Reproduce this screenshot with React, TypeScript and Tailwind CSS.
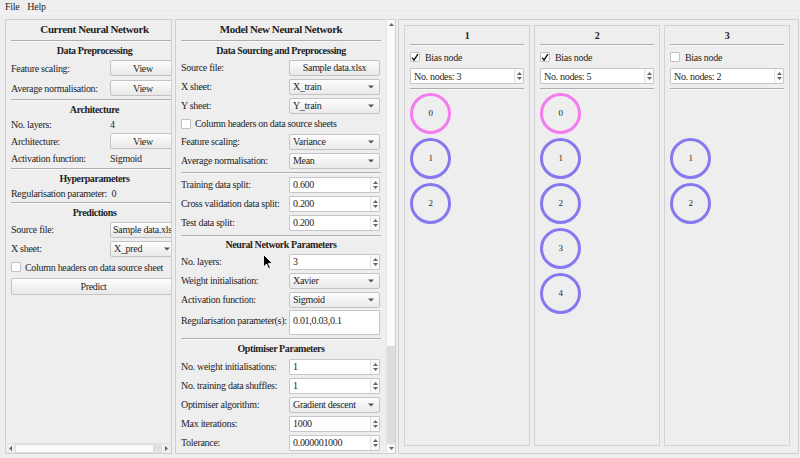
import React from "react";

const Tri = () => (
  <svg width="6" height="4" viewBox="0 0 6 4" className="shrink-0">
    <path d="M0 0.5H6L3 3.5Z" fill="#555" />
  </svg>
);

function Sep({ className = "" }: { className?: string }) {
  return <div className={`h-[2px] border-t border-[#aeacae] border-b border-b-[#f8f8f8] ${className}`} />;
}

function Button({ children, className = "" }: { children: React.ReactNode; className?: string }) {
  return (
    <div
      className={`h-[16px] flex items-center justify-center border border-[#c4c2c4] rounded-[2px] bg-linear-to-b from-[#fdfdfd] to-[#e9e8e9] overflow-hidden whitespace-nowrap ${className}`}
    >
      {children}
    </div>
  );
}

function Combo({ text, className = "" }: { text: string; className?: string }) {
  return (
    <div
      className={`h-[16px] flex items-center justify-between pl-[3px] pr-[5px] border border-[#c4c2c4] rounded-[2px] bg-linear-to-b from-[#fdfdfd] to-[#ebeaeb] overflow-hidden whitespace-nowrap ${className}`}
    >
      <span>{text}</span>
      <Tri />
    </div>
  );
}

function Spin({ text, className = "" }: { text: string; className?: string }) {
  return (
    <div className={`h-[16px] flex border border-[#c8c6c8] bg-white rounded-[1px] ${className}`}>
      <div className="flex-1 flex items-center pl-[3px] whitespace-nowrap overflow-hidden">{text}</div>
      <div className="w-[9px] border-l border-[#e3e1e3] flex flex-col items-center justify-center gap-[2px] bg-[#fafafa]">
        <svg width="5" height="3" viewBox="0 0 5 3">
          <path d="M0 3H5L2.5 0Z" fill="#666" />
        </svg>
        <svg width="5" height="3" viewBox="0 0 5 3">
          <path d="M0 0H5L2.5 3Z" fill="#666" />
        </svg>
      </div>
    </div>
  );
}

function Check({ checked = false }: { checked?: boolean }) {
  return (
    <div className="w-[10px] h-[10px] border border-[#c2c0c2] bg-white rounded-[1px] flex items-center justify-center shrink-0">
      {checked && (
        <svg width="9" height="9" viewBox="0 0 9 9">
          <path d="M1.2 4.6L3.4 7.4L7.8 0.8" stroke="#111" strokeWidth="1.6" fill="none" />
        </svg>
      )}
    </div>
  );
}

function LRow({ label, h, children }: { label: string; h: string; children?: React.ReactNode }) {
  return (
    <div className={`flex items-center ${h}`}>
      <div className="w-[99px] shrink-0 whitespace-nowrap">{label}</div>
      <div className="w-[66px] shrink-0">{children}</div>
    </div>
  );
}

function MRow({ label, h = "h-[19px]", children }: { label: string; h?: string; children?: React.ReactNode }) {
  return (
    <div className={`flex items-center ${h}`}>
      <div className="w-[108px] shrink-0 whitespace-nowrap">{label}</div>
      <div className="w-[91px] shrink-0">{children}</div>
    </div>
  );
}

function Title({ children, h }: { children: React.ReactNode; h: string }) {
  return <div className={`${h} flex items-center justify-center font-bold text-[11px] tracking-[-0.4px]`}>{children}</div>;
}
function Heading({ children, h }: { children: React.ReactNode; h: string }) {
  return <div className={`${h} flex items-center justify-center font-bold tracking-[-0.4px]`}>{children}</div>;
}

function Node({ n, bias }: { n: number; bias?: boolean }) {
  return (
    <div
      className={`w-[41px] h-[41px] rounded-full border-[3px] ${bias ? "border-[#f27cf0]" : "border-[#8479ee]"} flex items-center justify-center text-[9px]`}
    >
      {n}
    </div>
  );
}

function Layer({ title, bias, n }: { title: string; bias: boolean; n: number }) {
  const nodes: React.ReactNode[] = [];
  if (bias) {
    nodes.push(<Node key="b" n={0} bias />);
    for (let i = 1; i < n; i++) nodes.push(<Node key={i} n={i} />);
  } else {
    nodes.push(<div key="b" className="h-[41px]" />);
    for (let i = 1; i <= n; i++) nodes.push(<Node key={i} n={i} />);
  }
  return (
    <div className="w-[126px] border border-[#d3d1d3] flex flex-col px-[5px]">
      <div className="h-[18px] flex items-center justify-center font-bold">{title}</div>
      <Sep />
      <div className="h-[22px] flex items-center gap-[5px]">
        <Check checked={bias} />
        <span>Bias node</span>
      </div>
      <Spin text={`No. nodes: ${n}`} className="h-[15px]" />
      <Sep className="mt-[4px]" />
      <div className="flex flex-col gap-[4px] mt-[3px]">{nodes}</div>
    </div>
  );
}

export default function App() {
  return (
    <div className="relative w-[800px] h-[458px] bg-[#efeeef] flex flex-col text-[10px] tracking-[-0.3px] text-[#1e1e1e] font-['Liberation_Serif',serif] overflow-hidden">
      {/* menu */}
      <div className="h-[14px] flex items-center gap-[8px] pl-[5px] border-b border-[#f6f6f6]">
        <span>File</span>
        <span>Help</span>
      </div>

      <div className="flex-1 flex pl-[5px] pt-[5px] pb-[4px] gap-[3px]">
        {/* Left panel */}
        <div className="w-[167px] border border-[#d0ced0] flex flex-col">
          <div className="flex-1 overflow-hidden">
            <div className="w-[172px] pl-[5px] pt-[0px] flex flex-col">
              <Title h="h-[19px]">Current Neural Network</Title>
              <Sep className="mt-[1px]" />
              <Heading h="h-[16px]">Data Preprocessing</Heading>
              <LRow label="Feature scaling:" h="h-[20px]">
                <Button>View</Button>
              </LRow>
              <LRow label="Average normalisation:" h="h-[20px]">
                <Button>View</Button>
              </LRow>
              <Sep className="mt-[1px]" />
              <Heading h="h-[16px]">Architecture</Heading>
              <LRow label="No. layers:" h="h-[15px]">
                4
              </LRow>
              <LRow label="Architecture:" h="h-[18px]">
                <Button>View</Button>
              </LRow>
              <LRow label="Activation function:" h="h-[16px]">
                Sigmoid
              </LRow>
              <Sep className="mt-[2px]" />
              <Heading h="h-[17px]">Hyperparameters</Heading>
              <div className="h-[13px] flex items-center whitespace-nowrap">Regularisation parameter:&nbsp; 0</div>
              <Sep className="mt-[2px]" />
              <Heading h="h-[16px]">Predictions</Heading>
              <LRow label="Source file:" h="h-[19px]">
                <Button className="!justify-start pl-[2px]">Sample data.xlsx</Button>
              </LRow>
              <LRow label="X sheet:" h="h-[19px]">
                <Combo text="X_pred" />
              </LRow>
              <div className="h-[18px] flex items-center gap-[4px] whitespace-nowrap">
                <Check />
                <span>Column headers on data source sheet</span>
              </div>
              <Button className="mt-[2px] h-[17px] w-[165px]">Predict</Button>
            </div>
          </div>
          {/* horizontal scrollbar */}
          <div className="h-[10px] flex items-stretch border-t border-[#e2e0e2] bg-[#efeeef]">
            <div className="w-[9px] flex items-center justify-center">
              <svg width="3" height="5" viewBox="0 0 3 5">
                <path d="M3 0V5L0 2.5Z" fill="#666" />
              </svg>
            </div>
            <div className="flex-1 bg-[#fbfbfb] border border-[#dcdadc]" />
            <div className="w-[8px] bg-[#e2e0e2]" />
            <div className="w-[9px] flex items-center justify-center">
              <svg width="3" height="5" viewBox="0 0 3 5">
                <path d="M0 0V5L3 2.5Z" fill="#666" />
              </svg>
            </div>
          </div>
        </div>

        {/* Middle panel */}
        <div className="w-[221px] border border-[#d0ced0] flex">
          <div className="w-[210px] overflow-hidden px-[5px] flex flex-col">
            <Title h="h-[19px]">Model New Neural Network</Title>
            <Sep className="mt-[1px]" />
            <Heading h="h-[16px]">Data Sourcing and Preprocessing</Heading>
            <MRow label="Source file:">
              <Button>Sample data.xlsx</Button>
            </MRow>
            <MRow label="X sheet:">
              <Combo text="X_train" />
            </MRow>
            <MRow label="Y sheet:">
              <Combo text="Y_train" />
            </MRow>
            <div className="h-[17px] flex items-center gap-[4px] whitespace-nowrap">
              <Check />
              <span>Column headers on data source sheets</span>
            </div>
            <MRow label="Feature scaling:">
              <Combo text="Variance" />
            </MRow>
            <MRow label="Average normalisation:">
              <Combo text="Mean" />
            </MRow>
            <Sep className="mt-[2px]" />
            <div className="mt-[1px]" />
            <MRow label="Training data split:">
              <Spin text="0.600" />
            </MRow>
            <MRow label="Cross validation data split:">
              <Spin text="0.200" />
            </MRow>
            <MRow label="Test data split:">
              <Spin text="0.200" />
            </MRow>
            <Sep className="mt-[3px]" />
            <Heading h="h-[15px]">Neural Network Parameters</Heading>
            <MRow label="No. layers:">
              <Spin text="3" />
            </MRow>
            <MRow label="Weight initialisation:">
              <Combo text="Xavier" />
            </MRow>
            <MRow label="Activation function:">
              <Combo text="Sigmoid" />
            </MRow>
            <div className="h-[27px] flex items-center">
              <div className="w-[108px] shrink-0 whitespace-nowrap pb-[4px]">Regularisation parameter(s):</div>
              <div className="w-[91px] h-[25px] bg-white border border-[#c8c6c8] rounded-[1px] pl-[3px] pt-[2px]">
                0.01,0.03,0.1
              </div>
            </div>
            <Sep className="mt-[2px]" />
            <Heading h="h-[17px]">Optimiser Parameters</Heading>
            <MRow label="No. weight initialisations:">
              <Spin text="1" />
            </MRow>
            <MRow label="No. training data shuffles:">
              <Spin text="1" />
            </MRow>
            <MRow label="Optimiser algorithm:">
              <Combo text="Gradient descent" />
            </MRow>
            <MRow label="Max iterations:">
              <Spin text="1000" />
            </MRow>
            <MRow label="Tolerance:">
              <Spin text="0.000001000" />
            </MRow>
          </div>
          {/* vertical scrollbar */}
          <div className="w-[9px] flex flex-col bg-[#fafafa] border-l border-[#e6e4e6]">
            <div className="h-[9px] flex items-center justify-center">
              <svg width="5" height="3" viewBox="0 0 5 3">
                <path d="M0 3H5L2.5 0Z" fill="#666" />
              </svg>
            </div>
            <div className="flex-1 flex flex-col justify-end">
              <div className="h-[98px] bg-[#dedcde]" />
            </div>
            <div className="h-[9px] flex items-center justify-center">
              <svg width="5" height="3" viewBox="0 0 5 3">
                <path d="M0 0H5L2.5 3Z" fill="#666" />
              </svg>
            </div>
          </div>
        </div>

        {/* Right panel */}
        <div className="ml-[-1px] w-[401px] border border-[#d0ced0] flex gap-[4px] pl-[5px] pt-[5px] pb-[7px]">
          <Layer title="1" bias={true} n={3} />
          <Layer title="2" bias={true} n={5} />
          <Layer title="3" bias={false} n={2} />
        </div>
      </div>

      {/* mouse cursor */}
      <svg className="absolute left-[263px] top-[254px]" width="10" height="16" viewBox="0 0 10 16">
        <path d="M0.5 0.5V13L3.5 10L5.6 14.8L7.4 14L5.4 9.4H9.5Z" fill="#000" stroke="#fff" strokeWidth="0.9" />
      </svg>
    </div>
  );
}
